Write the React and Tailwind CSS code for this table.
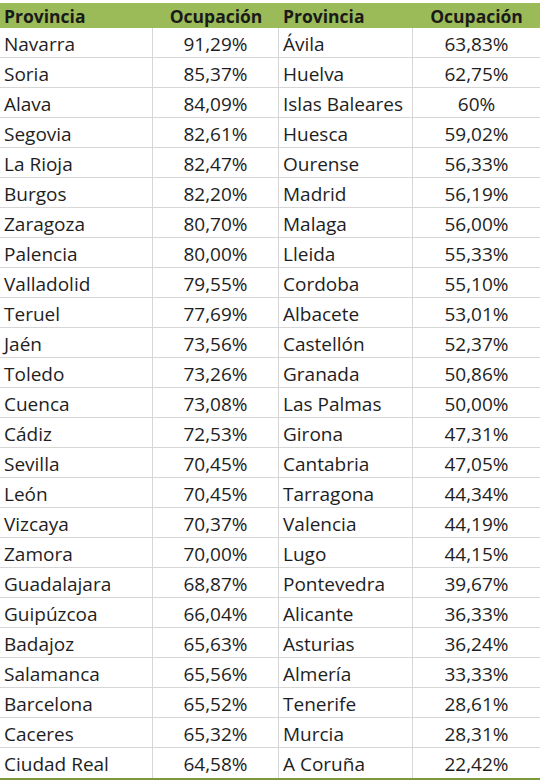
const rows = [
  ["Navarra", "91,29%", "Ávila", "63,83%"],
  ["Soria", "85,37%", "Huelva", "62,75%"],
  ["Alava", "84,09%", "Islas Baleares", "60%"],
  ["Segovia", "82,61%", "Huesca", "59,02%"],
  ["La Rioja", "82,47%", "Ourense", "56,33%"],
  ["Burgos", "82,20%", "Madrid", "56,19%"],
  ["Zaragoza", "80,70%", "Malaga", "56,00%"],
  ["Palencia", "80,00%", "Lleida", "55,33%"],
  ["Valladolid", "79,55%", "Cordoba", "55,10%"],
  ["Teruel", "77,69%", "Albacete", "53,01%"],
  ["Jaén", "73,56%", "Castellón", "52,37%"],
  ["Toledo", "73,26%", "Granada", "50,86%"],
  ["Cuenca", "73,08%", "Las Palmas", "50,00%"],
  ["Cádiz", "72,53%", "Girona", "47,31%"],
  ["Sevilla", "70,45%", "Cantabria", "47,05%"],
  ["León", "70,45%", "Tarragona", "44,34%"],
  ["Vizcaya", "70,37%", "Valencia", "44,19%"],
  ["Zamora", "70,00%", "Lugo", "44,15%"],
  ["Guadalajara", "68,87%", "Pontevedra", "39,67%"],
  ["Guipúzcoa", "66,04%", "Alicante", "36,33%"],
  ["Badajoz", "65,63%", "Asturias", "36,24%"],
  ["Salamanca", "65,56%", "Almería", "33,33%"],
  ["Barcelona", "65,52%", "Tenerife", "28,61%"],
  ["Caceres", "65,32%", "Murcia", "28,31%"],
  ["Ciudad Real", "64,58%", "A Coruña", "22,42%"],
];

const cols = "grid grid-cols-[153px_126px_134px_127px]";

export default function App() {
  return (
    <div className="w-[542px] h-[780px] bg-white pt-[3px] text-[#1e1e1e] font-['Open_Sans',sans-serif]">
      {/* header */}
      <div className={`${cols} w-[540px] h-[25px] bg-[#9bbb59] items-center text-[17.5px] leading-none font-bold text-[#1a1a1a]`}>
        <div className="pl-[4px] pt-[2px]">Provincia</div>
        <div className="text-center pt-[2px]">Ocupación</div>
        <div className="pl-[4px] pt-[2px]">Provincia</div>
        <div className="text-center pt-[2px]">Ocupación</div>
      </div>

      {/* rows */}
      <div className="w-[540px] border-b-2 border-[#7a9a3d]">
        {rows.map((r, i) => (
          <div
            key={i}
            className={`${cols} h-[30px] text-[19px] leading-none ${i < rows.length - 1 ? "border-b border-[#d6d6d6]" : ""}`}
          >
            <div className="pl-[4px] pt-[3px] flex items-center border-r border-[#d6d6d6]">{r[0]}</div>
            <div className="pt-[3px] flex items-center justify-center border-r border-[#d6d6d6]">{r[1]}</div>
            <div className="pl-[4px] pt-[3px] flex items-center border-r border-[#d6d6d6]">{r[2]}</div>
            <div className="pt-[3px] flex items-center justify-center">{r[3]}</div>
          </div>
        ))}
      </div>
    </div>
  );
}
